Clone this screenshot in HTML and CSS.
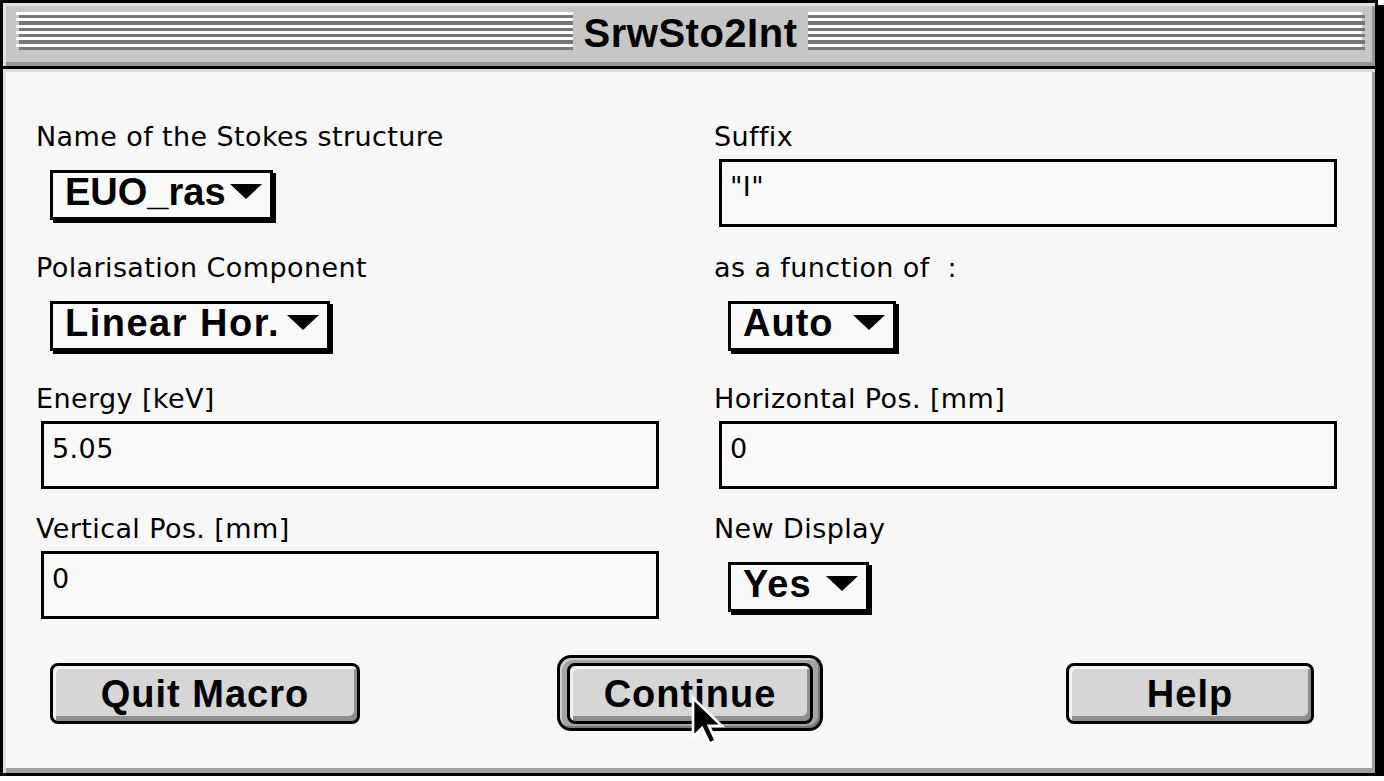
FILE: index.html
```html
<!DOCTYPE html>
<html>
<head>
<meta charset="utf-8">
<title>SrwSto2Int</title>
<link rel="stylesheet" href="styles.css">
</head>
<body>
<div class="window">
  <div class="titlebar">
    <div class="stripes"><span class="title">SrwSto2Int</span></div>
  </div>
  <div class="content">
    <div class="grid">
      <div class="field">
        <div class="label">Name of the Stokes structure</div>
        <div class="popup popup-name"><span class="popup-text">EUO_ras</span><span class="arrow"></span></div>
      </div>
      <div class="field">
        <div class="label">Suffix</div>
        <div class="textbox">"I"</div>
      </div>
      <div class="field">
        <div class="label">Polarisation Component</div>
        <div class="popup popup-pol"><span class="popup-text">Linear Hor.</span><span class="arrow"></span></div>
      </div>
      <div class="field">
        <div class="label">as a function of &nbsp;:</div>
        <div class="popup popup-func"><span class="popup-text">Auto</span><span class="arrow"></span></div>
      </div>
      <div class="field">
        <div class="label">Energy [keV]</div>
        <div class="textbox">5.05</div>
      </div>
      <div class="field">
        <div class="label">Horizontal Pos. [mm]</div>
        <div class="textbox">0</div>
      </div>
      <div class="field">
        <div class="label">Vertical Pos. [mm]</div>
        <div class="textbox">0</div>
      </div>
      <div class="field">
        <div class="label">New Display</div>
        <div class="popup popup-yes"><span class="popup-text">Yes</span><span class="arrow"></span></div>
      </div>
    </div>
    <div class="buttons">
      <div class="button btn-quit">Quit Macro</div>
      <div class="default-ring"><div class="button btn-continue">Continue</div></div>
      <div class="button btn-help">Help</div>
    </div>
  </div>
  <svg class="cursor" width="36" height="54" viewBox="0 0 12 18">
    <polygon points="1,1 1,14 4,11 6.5,16.2 8.6,15.2 6.3,10.3 10.6,10.3" fill="#000" stroke="#fff" stroke-width="0.9" stroke-linejoin="miter"/>
  </svg>
</div>
</body>
</html>
```

FILE: styles.css
```css
html, body {
  margin: 0;
  padding: 0;
  background: #ffffff;
}

.window {
  position: relative;
  width: 1378px;
  height: 776px;
  box-sizing: border-box;
  border: 3px solid #000;
  box-shadow: 6px 5px 0 #000;
  display: flex;
  flex-direction: column;
  font-family: "DejaVu Sans", "Liberation Sans", sans-serif;
  color: #000;
}

.titlebar {
  flex: none;
  height: 66px;
  box-sizing: border-box;
  padding: 9px 10px 0 13px;
  background: #c6c6c6;
  border-bottom: 3px solid #000;
  box-shadow: inset 3px 3px 0 #e0e0e0, inset -3px -4px 0 #959595;
}

.stripes {
  height: 38px;
  display: flex;
  justify-content: center;
  background-image:
    repeating-linear-gradient(to bottom, transparent 0 3px, #767676 3px 6.33px),
    repeating-linear-gradient(to bottom, #ffffff 0 3px, transparent 3px 6.33px);
  background-repeat: no-repeat, no-repeat;
  background-size: calc(100% - 3px) 100%, calc(100% - 3px) 100%;
  background-position: 3px 0, 0 0;
}

.title {
  display: block;
  height: 38px;
  box-sizing: border-box;
  padding: 2px 11px 0;
  line-height: 38px;
  background: #c6c6c6;
  font-family: "Liberation Sans", Arial, sans-serif;
  font-weight: bold;
  font-size: 40px;
  letter-spacing: 0.5px;
}

.content {
  flex: 1;
  background: #f7f7f7;
  box-shadow: inset 3px 3px 0 #dcdcdc, inset -3px -5px 0 #a0a0a0;
  padding: 53px 38px 0 33px;
}

.grid {
  display: grid;
  grid-template-columns: 623px 623px;
  grid-template-rows: 131px 131px 130px 130px;
  column-gap: 55px;
}

.field {
  display: flex;
  flex-direction: column;
  align-items: flex-start;
}

.label {
  height: 30px;
  line-height: 30px;
  font-size: 27px;
  letter-spacing: 0.4px;
  white-space: nowrap;
}

.textbox {
  margin: 7px 0 0 5px;
  width: 618px;
  height: 68px;
  box-sizing: border-box;
  border: 3px solid #000;
  background: #f9f9f9;
  padding: 10px 8px 0;
  line-height: 30px;
  font-size: 27px;
  letter-spacing: 0.4px;
}

.popup {
  margin: 18px 0 0 14px;
  height: 50px;
  box-sizing: border-box;
  border: 3px solid #000;
  background: #f9f9f9;
  box-shadow: 3px 3px 0 #000;
  display: flex;
  align-items: flex-start;
  padding: 0 8px 0 12px;
  font-family: "Liberation Sans", Arial, sans-serif;
  font-weight: bold;
  font-size: 38px;
  line-height: 38px;
  letter-spacing: 1px;
  white-space: nowrap;
}

.popup-name { width: 223px; letter-spacing: 0; }
.popup-pol  { width: 280px; letter-spacing: 1.5px; }
.popup-func { width: 168px; }
.popup-yes  { width: 141px; }

.arrow {
  margin: 11px 0 0 auto;
  width: 0;
  height: 0;
  border-left: 16px solid transparent;
  border-right: 16px solid transparent;
  border-top: 15px solid #000;
}

.buttons {
  display: flex;
  align-items: center;
  height: 76px;
  margin-top: 11px;
}

.button {
  height: 61px;
  box-sizing: border-box;
  border: 3px solid #000;
  border-radius: 8px;
  background: #d6d6d6;
  box-shadow: inset 3px 3px 0 #f2f2f2, inset -3px -5px 0 #8e8e8e;
  display: flex;
  justify-content: center;
  align-items: center;
  padding-top: 1px;
  font-family: "Liberation Sans", Arial, sans-serif;
  font-weight: bold;
  font-size: 38px;
  line-height: 38px;
  letter-spacing: 1px;
}

.btn-quit {
  width: 310px;
  margin-left: 14px;
}

.default-ring {
  margin-left: 197px;
  width: 266px;
  height: 76px;
  box-sizing: border-box;
  border: 3px solid #000;
  border-radius: 14px;
  padding: 5px 7px 4px;
  background: #a4a4a4;
  box-shadow: inset 2px 2px 0 #d0d0d0, inset -2px -2px 0 #777;
}

.btn-continue {
  width: 246px;
}

.btn-help {
  width: 248px;
  margin-left: 243px;
}

.cursor {
  position: absolute;
  left: 687px;
  top: 692px;
}
```
